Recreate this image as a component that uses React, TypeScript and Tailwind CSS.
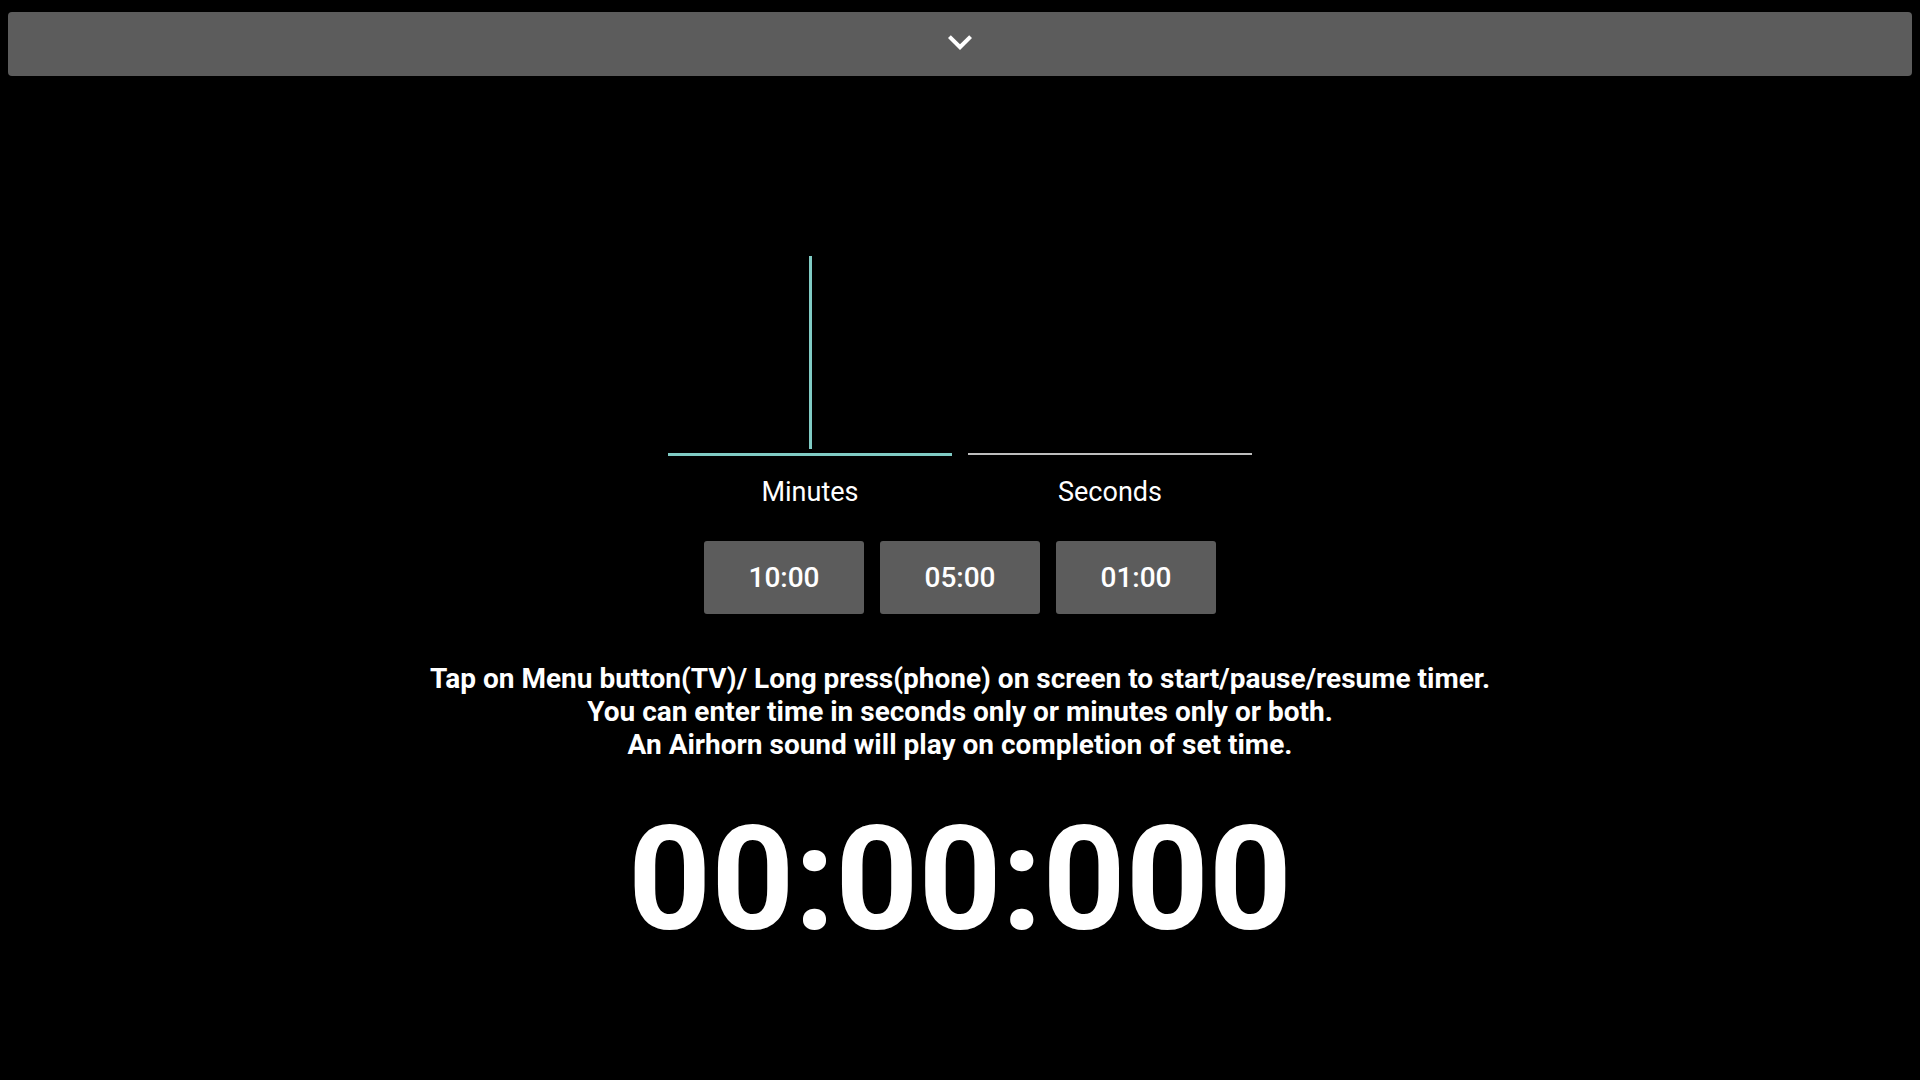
import React from "react";

function ExpandMore() {
  return (
    <svg width="48" height="48" viewBox="0 0 24 24" fill="#ffffff" aria-hidden="true">
      <path d="M16.59 8.59 12 13.17 7.41 8.59 6 10l6 6 6-6z" />
    </svg>
  );
}

function TimeField({ label, focused }: { label: string; focused?: boolean }) {
  return (
    <div className="flex w-[284px] flex-col items-center">
      <div className="flex h-[197px] w-full justify-center">
        {focused && <div className="h-[193px] w-[3px] bg-[#80cbc4]" />}
      </div>
      <div className="h-[3px] w-full">
        {focused ? (
          <div className="h-[3px] w-full bg-[#80cbc4]" />
        ) : (
          <div className="h-[2px] w-full bg-[#bdbdbd]" />
        )}
      </div>
      <div className="mt-[20px] text-[27px] leading-[32px] text-white">{label}</div>
    </div>
  );
}

function Preset({ value }: { value: string }) {
  return (
    <button className="flex h-[73px] w-[160px] items-center justify-center rounded-[3px] bg-[#5c5c5c] text-[28px] font-medium text-white">
      {value}
    </button>
  );
}

export default function App() {
  return (
    <div className="min-h-screen w-full bg-black font-['Roboto',sans-serif] text-white">
      <div className="px-2 pt-3">
        <div className="flex h-16 w-full items-start justify-center rounded-[4px] bg-[#5c5c5c]">
          <div className="mt-[6px]">
            <ExpandMore />
          </div>
        </div>
      </div>

      <div className="flex flex-col items-center">
        <div className="mt-[180px] flex gap-4">
          <TimeField label="Minutes" focused />
          <TimeField label="Seconds" />
        </div>

        <div className="mt-[33px] flex gap-4">
          <Preset value="10:00" />
          <Preset value="05:00" />
          <Preset value="01:00" />
        </div>

        <div className="mt-[48px] text-center text-[28px] font-bold leading-[33px]">
          <p>Tap on Menu button(TV)/ Long press(phone) on screen to start/pause/resume timer.</p>
          <p>You can enter time in seconds only or minutes only or both.</p>
          <p>An Airhorn sound will play on completion of set time.</p>
        </div>

        <div className="mt-[46px] text-[145px] font-bold leading-none">00:00:000</div>
      </div>
    </div>
  );
}
